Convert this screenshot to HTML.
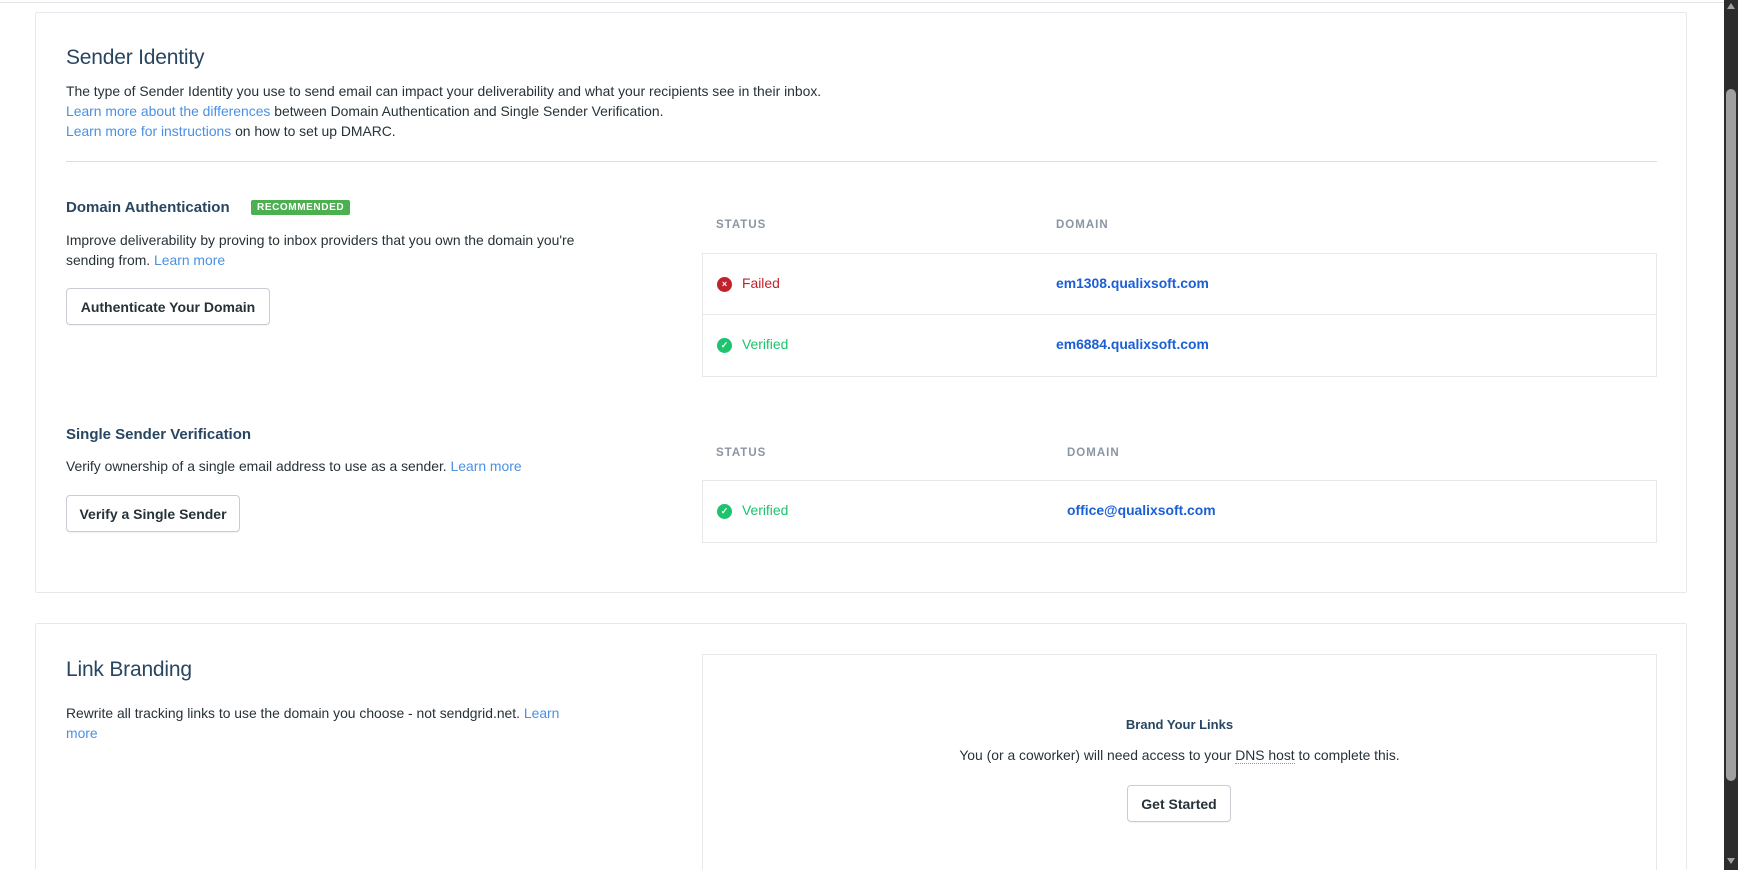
<!DOCTYPE html>
<html><head><meta charset="utf-8"><style>
*{box-sizing:border-box;margin:0;padding:0}
html,body{width:1738px;height:870px;overflow:hidden}
body{background:#fff;font-family:"Liberation Sans",sans-serif;color:#263238;position:relative}
#wrap{position:absolute;left:0;top:0;width:1738px;height:870px;overflow:hidden}
.topline{position:absolute;left:0;top:2px;width:1724px;height:1px;background:#e2e4e7}
.card{position:absolute;left:35px;width:1652px;border:1px solid #e6e8eb;border-radius:2px;background:#fff}
.abs{position:absolute;white-space:nowrap}
h1{font-size:21px;font-weight:normal;color:#294661;letter-spacing:-0.2px}
.p{font-size:13.9px;color:#263238}
a{color:#4a90e2;text-decoration:none}
h3{font-size:15px;font-weight:bold;color:#294661}
.badge{background:#4caf50;color:#fff;font-size:10px;font-weight:bold;letter-spacing:0.6px;padding:0 6px;height:15px;line-height:15px;border-radius:2px}
.btn{border:1px solid #c9ccd2;border-radius:4px;background:#fff;font-size:14px;font-weight:bold;color:#263238;display:flex;align-items:center;justify-content:center;box-shadow:0 1px 1px rgba(0,0,0,.05)}
.th{font-size:11.5px;font-weight:bold;color:#8b96a3;letter-spacing:1px}
.tbl{position:absolute;left:702px;width:955px;border:1px solid #e6e8eb}
.row{height:61px;position:relative;border-bottom:1px solid #e6e8eb}
.row:last-child{border-bottom:none}
.ic{position:absolute;left:14px;top:23px;width:15px;height:15px;border-radius:50%;color:#fff;font-size:9px;line-height:15px;text-align:center;font-weight:bold}
.st{position:absolute;left:39px;top:21px;font-size:13.9px}
.dom{position:absolute;top:21px;font-size:13.9px;font-weight:bold;color:#1a5fd6}
.sb{position:absolute;left:1724px;top:0;width:14px;height:870px;background:#2c2c2c}
.thumb{position:absolute;left:2px;top:89px;width:10px;height:692px;background:#a0a0a0;border-radius:5px}
</style></head><body><div id="wrap">
<div class="topline"></div>
<div class="card" style="top:12px;height:581px">
  <h1 class="abs" style="left:30px;top:33px">Sender Identity</h1>
  <div class="abs p" style="left:30px;top:70px">The type of Sender Identity you use to send email can impact your deliverability and what your recipients see in their inbox.</div>
  <div class="abs p" style="left:30px;top:90px"><a>Learn more about the differences</a> between Domain Authentication and Single Sender Verification.</div>
  <div class="abs p" style="left:30px;top:110px"><a>Learn more for instructions</a> on how to set up DMARC.</div>
  <div class="abs" style="left:30px;top:148px;width:1591px;height:1px;background:#d9dce0"></div>
  <h3 class="abs" style="left:30px;top:186px">Domain Authentication</h3>
  <div class="abs badge" style="left:215px;top:187px">RECOMMENDED</div>
  <div class="abs p" style="left:30px;top:217px;line-height:20px">Improve deliverability by proving to inbox providers that you own the domain you're<br>sending from. <a>Learn more</a></div>
  <div class="abs btn" style="left:30px;top:275px;width:204px;height:37px">Authenticate Your Domain</div>
  <div class="abs th" style="left:680px;top:206px">STATUS</div>
  <div class="abs th" style="left:1020px;top:206px">DOMAIN</div>
  <h3 class="abs" style="left:30px;top:413px">Single Sender Verification</h3>
  <div class="abs p" style="left:30px;top:445px">Verify ownership of a single email address to use as a sender. <a>Learn more</a></div>
  <div class="abs btn" style="left:30px;top:482px;width:174px;height:37px">Verify a Single Sender</div>
  <div class="abs th" style="left:680px;top:434px">STATUS</div>
  <div class="abs th" style="left:1031px;top:434px">DOMAIN</div>
</div>
<div class="tbl" style="top:253px">
  <div class="row"><div class="ic" style="background:#c0232c">×</div><div class="st" style="color:#c0232c">Failed</div><div class="dom" style="left:353px">em1308.qualixsoft.com</div></div>
  <div class="row"><div class="ic" style="background:#1bc46d">✓</div><div class="st" style="color:#1bc46d">Verified</div><div class="dom" style="left:353px">em6884.qualixsoft.com</div></div>
</div>
<div class="tbl" style="top:480px">
  <div class="row"><div class="ic" style="background:#1bc46d">✓</div><div class="st" style="color:#1bc46d">Verified</div><div class="dom" style="left:364px">office@qualixsoft.com</div></div>
</div>
<div class="card" style="top:623px;height:247px;overflow:hidden;border-bottom:none">
  <h1 class="abs" style="left:30px;top:34px">Link Branding</h1>
  <div class="abs p" style="left:30px;top:79px;line-height:20px">Rewrite all tracking links to use the domain you choose - not sendgrid.net. <a>Learn</a><br><a>more</a></div>
  <div class="abs" style="left:666px;top:30px;width:955px;height:300px;border:1px solid #e6e8eb">
    <div class="abs" style="left:0;width:953px;top:62px;text-align:center;font-size:13px;font-weight:bold;color:#294661">Brand Your Links</div>
    <div class="abs p" style="left:0;width:953px;top:92px;text-align:center">You (or a coworker) will need access to your <span style="border-bottom:1px dotted #8b96a3">DNS host</span> to complete this.</div>
    <div class="abs btn" style="left:424px;top:130px;width:104px;height:37px">Get Started</div>
  </div>
</div>
<div class="sb"><div class="thumb"></div>
<div style="position:absolute;left:3px;top:3px;width:0;height:0;border-left:4px solid transparent;border-right:4px solid transparent;border-bottom:6px solid #a0a0a0"></div>
<div style="position:absolute;left:3px;top:858px;width:0;height:0;border-left:4px solid transparent;border-right:4px solid transparent;border-top:6px solid #a0a0a0"></div>
</div>
</div></body></html>
